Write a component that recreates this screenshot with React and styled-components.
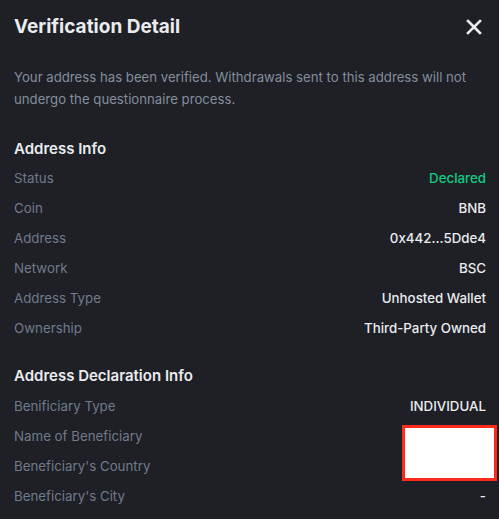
import styled, { createGlobalStyle } from 'styled-components';

const GlobalStyle = createGlobalStyle`
  html, body {
    margin: 0;
    padding: 0;
    background: #1e2026;
  }
  * {
    box-sizing: border-box;
  }
`;

const addressInfo = [
  { label: 'Status', value: 'Declared', status: true },
  { label: 'Coin', value: 'BNB' },
  { label: 'Address', value: '0x442...5Dde4' },
  { label: 'Network', value: 'BSC' },
  { label: 'Address Type', value: 'Unhosted Wallet' },
  { label: 'Ownership', value: 'Third-Party Owned' },
];

const declarationInfo = [
  { label: 'Benificiary Type', value: 'INDIVIDUAL' },
  { label: 'Name of Beneficiary', value: '' },
  { label: "Beneficiary's Country", value: '' },
  { label: "Beneficiary's City", value: '-' },
];

const CloseIcon = () => (
  <svg width="16" height="16" viewBox="0 0 16 16" fill="none">
    <path d="M2 2L14 14M14 2L2 14" stroke="#eaecef" strokeWidth="2.6" strokeLinecap="square" />
  </svg>
);

export default function App() {
  return (
    <>
      <GlobalStyle />
      <Modal>
        <Header>
          <Title>Verification Detail</Title>
          <CloseButton aria-label="close">
            <CloseIcon />
          </CloseButton>
        </Header>
        <Description>
          Your address has been verified. Withdrawals sent to this address will not
          undergo the questionnaire process.
        </Description>

        <SectionTitle>Address Info</SectionTitle>
        {addressInfo.map((row) => (
          <Row key={row.label}>
            <Label>{row.label}</Label>
            <Value status={row.status}>{row.value}</Value>
          </Row>
        ))}

        <Section>
          <SectionTitle spaced>Address Declaration Info</SectionTitle>
          <Rows>
            {declarationInfo.map((row) => (
              <Row key={row.label}>
                <Label>{row.label}</Label>
                <Value>{row.value}</Value>
              </Row>
            ))}
          </Rows>
          <Redaction />
        </Section>
      </Modal>
    </>
  );
}

const Modal = styled.div`
  position: relative;
  min-height: 519px;
  padding: 0 13px 0 14px;
  background: #1e2026;
  font-family: Inter, 'Liberation Sans', sans-serif;
  color: #eaecef;
`;

const Header = styled.div`
  display: flex;
  align-items: center;
  justify-content: space-between;
  height: 54px;
`;

const Title = styled.h1`
  margin: 0;
  font-size: 19px;
  line-height: 28px;
  font-weight: 700;
  color: #eaecef;
`;

const CloseButton = styled.button`
  display: flex;
  align-items: center;
  justify-content: center;
  padding: 0;
  margin-right: 4px;
  background: none;
  border: none;
  cursor: pointer;
`;

const Description = styled.p`
  margin: 12px 0 0;
  font-size: 13.2px;
  line-height: 22px;
  color: #848e9c;
`;

const Section = styled.section`
  position: relative;
`;

const SectionTitle = styled.h2`
  margin: ${(p) => (p.spaced ? '17px' : '23px')} 0 0;
  height: 30px;
  display: flex;
  align-items: center;
  font-size: 15px;
  font-weight: 600;
  color: #eaecef;
`;

const Rows = styled.div`
  padding-top: 1px;
`;

const Row = styled.div`
  display: flex;
  align-items: center;
  justify-content: space-between;
  height: 30px;
  font-size: 13.3px;
`;

const Label = styled.span`
  color: #707a8a;
`;

const Value = styled.span`
  color: ${(p) => (p.status ? '#0ecb81' : '#eaecef')};
  font-weight: 500;
`;

const Redaction = styled.div`
  position: absolute;
  right: -11px;
  top: 65px;
  width: 95px;
  height: 56px;
  background: #ffffff;
  border: 3px solid #ff2a1c;
`;
